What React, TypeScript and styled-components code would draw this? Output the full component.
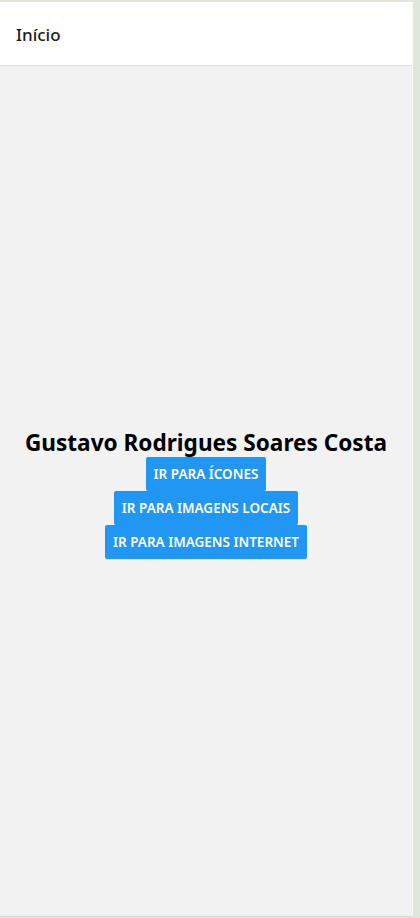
import React from "react";
import styled, { createGlobalStyle } from "styled-components";

const Global = createGlobalStyle`
  html, body { margin: 0; padding: 0; background: #dfe6da; }
  body { font-family: "Noto Sans", "Open Sans", Roboto, sans-serif; }
  * { box-sizing: border-box; }
`;

const Page = styled.div`
  width: 420px;
  height: 918px;
  padding-top: 2px;
  display: flex;
  flex-direction: column;
  align-items: flex-start;
`;

const Frame = styled.div`
  width: 413px;
  height: 915px;
  display: flex;
  flex-direction: column;
  background: #f2f2f2;
  border-right: 1px solid #fafafa;
  border-bottom: 1px solid #d6d6d6;
`;

const Header = styled.header`
  height: 64px;
  flex: none;
  background: #ffffff;
  border-bottom: 1px solid #e0e0e0;
  display: flex;
  align-items: center;
  padding: 2px 16px 0;
`;

const HeaderTitle = styled.h1`
  margin: 0;
  font-size: 17px;
  font-weight: 500;
  color: #1c1c1c;
`;

const Content = styled.main`
  flex: 1;
  display: flex;
  flex-direction: column;
  align-items: center;
  justify-content: center;
  padding-top: 6px;
`;

const Name = styled.h2`
  margin: 0 0 1px;
  font-size: 22.6px;
  font-weight: 700;
  color: #000;
  line-height: 27px;
`;

const Button = styled.button`
  border: none;
  border-radius: 2px;
  background: #2196f3;
  color: #fff;
  font-family: inherit;
  font-size: 13.5px;
  font-weight: 600;
  text-transform: uppercase;
  height: 34px;
  padding: 0 8px;
  margin: 0;
  box-shadow: 0 1px 1px rgba(0, 0, 0, 0.08);
  cursor: pointer;
`;

export default function App() {
  return (
    <>
      <Global />
      <Page>
        <Frame>
          <Header>
            <HeaderTitle>Início</HeaderTitle>
          </Header>
          <Content>
            <Name>Gustavo Rodrigues Soares Costa</Name>
            <Button>Ir para ícones</Button>
            <Button>Ir para imagens locais</Button>
            <Button>Ir para imagens internet</Button>
          </Content>
        </Frame>
      </Page>
    </>
  );
}
